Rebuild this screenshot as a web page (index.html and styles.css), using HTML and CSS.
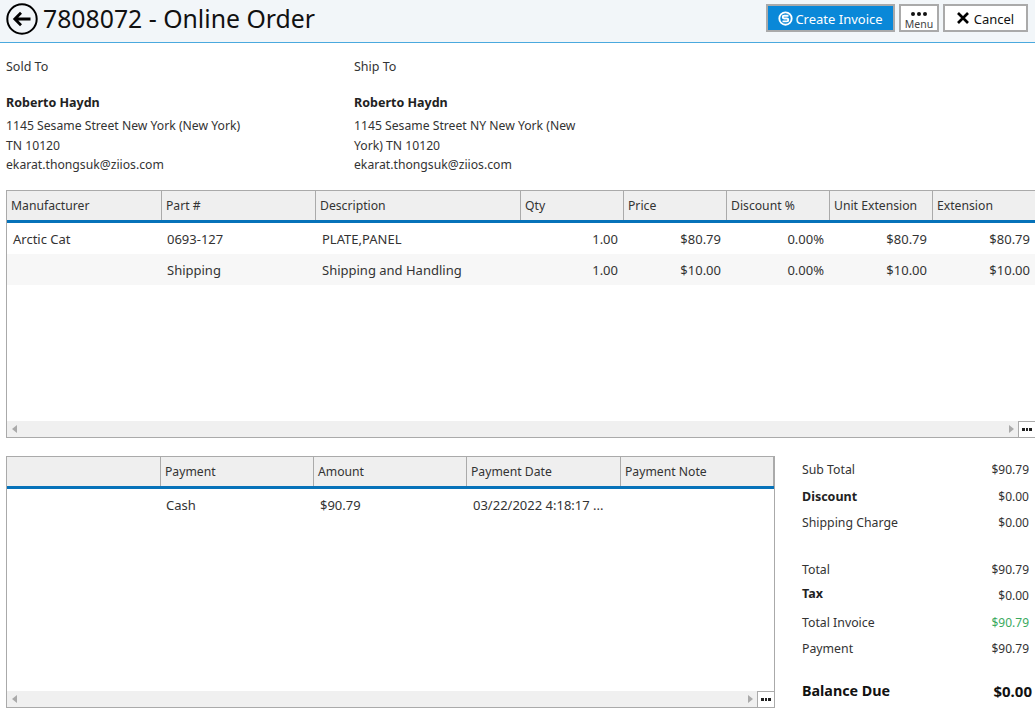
FILE: index.html
```html
<!DOCTYPE html>
<html lang="en">
<head>
<meta charset="utf-8">
<title>7808072 - Online Order</title>
<link rel="stylesheet" href="styles.css">
</head>
<body>
<header class="topbar">
  <div class="title-wrap">
    <svg class="back" viewBox="0 0 32 32" width="32" height="32"><circle cx="16" cy="16" r="14.7" fill="none" stroke="#000" stroke-width="2"/><path d="M24.5 16H9M15 9.8 8.8 16l6.2 6.2" fill="none" stroke="#000" stroke-width="2.8"/></svg>
    <h1 class="title">7808072 - Online Order</h1>
  </div>
  <div class="actions">
    <button class="btn btn-primary"><svg viewBox="0 0 16 16" width="15" height="15"><circle cx="8" cy="8" r="6.6" fill="none" stroke="#fff" stroke-width="2"/><path d="M11.2 5H6.5a1.5 1.5 0 0 0 0 3h3a1.5 1.5 0 0 1 0 3H4.8" fill="none" stroke="#fff" stroke-width="2"/></svg><span class="btn-text">Create Invoice</span></button>
    <button class="btn btn-menu"><span class="dots"><i></i><i></i><i></i></span><span>Menu</span></button>
    <button class="btn btn-cancel"><svg viewBox="0 0 12 12" width="12" height="12"><path d="M1 1l10 10M11 1 1 11" stroke="#000" stroke-width="2.7"/></svg><span class="btn-text">Cancel</span></button>
  </div>
</header>

<section class="addresses">
  <div class="address">
    <div class="addr-label">Sold To</div>
    <div class="addr-name">Roberto Haydn</div>
    <div class="addr-text">1145 Sesame Street New York (New York)<br>TN 10120<br>ekarat.thongsuk@ziios.com</div>
  </div>
  <div class="address">
    <div class="addr-label">Ship To</div>
    <div class="addr-name">Roberto Haydn</div>
    <div class="addr-text">1145 Sesame Street NY New York (New<br>York) TN 10120<br>ekarat.thongsuk@ziios.com</div>
  </div>
</section>

<section class="grid grid-items">
  <div class="row head cols-items">
    <div>Manufacturer</div><div>Part #</div><div>Description</div><div>Qty</div><div>Price</div><div>Discount %</div><div>Unit Extension</div><div>Extension</div>
  </div>
  <div class="body">
    <div class="row cols-items">
      <div>Arctic Cat</div><div>0693-127</div><div>PLATE,PANEL</div><div class="num">1.00</div><div class="num">$80.79</div><div class="num">0.00%</div><div class="num">$80.79</div><div class="num">$80.79</div>
    </div>
    <div class="row alt cols-items">
      <div></div><div>Shipping</div><div>Shipping and Handling</div><div class="num">1.00</div><div class="num">$10.00</div><div class="num">0.00%</div><div class="num">$10.00</div><div class="num">$10.00</div>
    </div>
  </div>
  <div class="scrollbar">
    <span class="arrow left"></span><span class="arrow right"></span><span class="more"><i></i><i></i><i></i></span>
  </div>
</section>

<section class="lower">
  <div class="grid grid-pay">
    <div class="row head cols-pay">
      <div></div><div>Payment</div><div>Amount</div><div>Payment Date</div><div>Payment Note</div>
    </div>
    <div class="body">
      <div class="row cols-pay">
        <div></div><div>Cash</div><div>$90.79</div><div>03/22/2022 4:18:17 ...</div><div></div>
      </div>
    </div>
    <div class="scrollbar">
      <span class="arrow left"></span><span class="arrow right"></span><span class="more"><i></i><i></i><i></i></span>
    </div>
  </div>
  <aside class="totals">
    <div class="t t1"><span>Sub Total</span><span>$90.79</span></div>
    <div class="t t2 strong"><span>Discount</span><span>$0.00</span></div>
    <div class="t t3"><span>Shipping Charge</span><span>$0.00</span></div>
    <div class="t t4"><span>Total</span><span>$90.79</span></div>
    <div class="t t5 strong"><span>Tax</span><span>$0.00</span></div>
    <div class="t t6"><span>Total Invoice</span><span class="green">$90.79</span></div>
    <div class="t t7"><span>Payment</span><span>$90.79</span></div>
    <div class="t balance"><span>Balance Due</span><span>$0.00</span></div>
  </aside>
</section>
</body>
</html>
```
FILE: styles.css
```css
* { box-sizing: border-box; }
html, body { margin: 0; padding: 0; }
body {
  width: 1035px;
  height: 715px;
  overflow: hidden;
  background: #fff;
  color: #333;
  font-family: "Noto Sans", "Open Sans", sans-serif;
  font-size: 12.5px;
}
.topbar {
  height: 43px;
  background: #f2f6f9;
  border-bottom: 1px solid #4aa9de;
  display: flex;
  justify-content: space-between;
  padding: 3px 7px 0 6px;
}
.title-wrap { display: flex; align-items: flex-start; gap: 5px; }
.back { display: block; }
.title {
  margin: 0;
  font-size: 24.8px;
  font-weight: 400;
  line-height: 30px;
  color: #111;
}
.actions { display: flex; gap: 4px; padding-top: 1px; height: 29px; }
.btn {
  font-family: inherit;
  border: 2px solid #aaa;
  background: #fff;
  color: #111;
  padding: 0;
  display: flex;
  align-items: center;
  justify-content: center;
  font-size: 13px;
  height: 28px;
}
.btn-text { padding-top: 2px; }
.btn-primary { width: 129px; background: #0a88d8; color: #fff; gap: 2px; }
.btn-primary .btn-text { color: #fff; }
.btn-menu { width: 40px; flex-direction: column; font-size: 10.5px; line-height: 11px; color: #444; padding-top: 3px; }
.btn-cancel { width: 85px; gap: 5px; }
.dots { display: flex; gap: 2px; height: 9px; align-items: center; }
.dots i { width: 4px; height: 4px; border-radius: 50%; background: #111; }

.addresses { display: flex; padding: 15px 0 0 6px; height: 147px; }
.address { width: 348px; }
.addr-label { line-height: 17px; margin-bottom: 19px; }
.addr-name { font-weight: 700; line-height: 17px; margin-bottom: 5px; color: #222; }
.addr-text { line-height: 19.5px; width: 240px; white-space: nowrap; font-size: 12.2px; }

.grid {
  border: 1px solid #aaa;
  display: flex;
  flex-direction: column;
  overflow: hidden;
  background: #fff;
}
.grid-items { margin-left: 6px; width: 1040px; height: 248px; border-right: 0; }
.row { display: grid; height: 31px; align-items: center; }
.cols-items { grid-template-columns: 155px 154px 205px 103px 103px 103px 103px 103px; }
.cols-pay { grid-template-columns: 154px 153px 153px 154px 153px; }
.head {
  height: 32px;
  background: #efefef;
  border-bottom: 3px solid #0672b9;
  font-size: 12.2px;
}
.head > div {
  height: 29px;
  line-height: 29px;
  padding-left: 4px;
  border-right: 1px solid #aaa;
  white-space: nowrap;
}
.body { flex: 1; font-size: 13px; }
.body .row > div { padding-left: 6px; white-space: nowrap; overflow: hidden; }
.body .row > div:nth-child(2) { padding-left: 5px; }
.body .row > .num { text-align: right; padding: 0 6px 0 0; }
.alt { background: #f7f7f7; }
.scrollbar {
  height: 16px;
  background: #f0f0f0;
  position: relative;
  display: flex;
  align-items: center;
  padding-left: 5px;
}
.arrow { width: 0; height: 0; border-top: 4px solid transparent; border-bottom: 4px solid transparent; }
.arrow.left { border-right: 5px solid #aaa; }
.arrow.right { border-left: 5px solid #aaa; margin-left: auto; }
.more {
  position: absolute;
  top: 0;
  width: 17px;
  height: 16px;
  border: 1px solid #aaa;
  border-width: 1px 0 0 1px;
  background: #fff;
  display: flex;
  align-items: center;
  justify-content: center;
  gap: 1px;
}
.more i { width: 2.5px; height: 2.5px; background: #222; }
.grid-items .more { left: 1011px; }
.grid-items .arrow.right { margin-right: 32px; }
.grid-pay .arrow.right { margin-right: 21px; }
.grid-pay .more { right: 0; }

.lower { display: flex; padding: 18px 0 0 6px; }
.grid-pay { width: 769px; height: 252px; }
.totals { width: 260px; padding: 5px 3px 0 27px; position: relative; }
.t { display: flex; justify-content: space-between; line-height: 17px; font-size: 12.3px; }
.t > span:last-child { font-size: 12px; padding-right: 3px; }
.t2 { margin-top: 10px; }
.t3 { margin-top: 9px; }
.t4 { margin-top: 30px; }
.t5 { margin-top: 7px; }
.t5 > span:last-child { margin-top: 2px; }
.t6 { margin-top: 10px; }
.t7 { margin-top: 9px; }
.strong span:first-child { font-weight: 700; color: #222; font-size: 12.5px; }
.green { color: #3aaa5e; }
.balance { margin-top: 24px; font-size: 14.3px; line-height: 20px; font-weight: 700; color: #111; }
.balance > span:last-child { font-size: 15px; padding-right: 0; }
```
